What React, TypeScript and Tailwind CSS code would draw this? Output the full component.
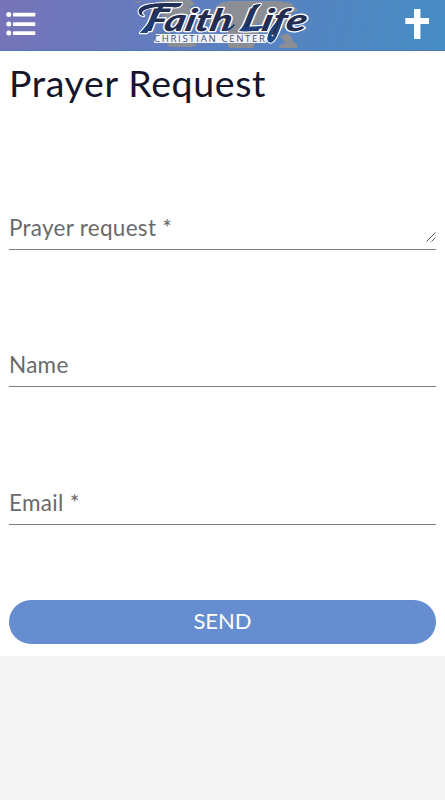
import { useState } from "react";
import type { FormEvent } from "react";

interface Field {
  id: string;
  label: string;
  multiline?: boolean;
  labelClass: string;
}

const fields: Field[] = [
  { id: "request", label: "Prayer request *", multiline: true, labelClass: "placeholder:tracking-[0.28px]" },
  { id: "name", label: "Name", labelClass: "placeholder:tracking-[0.3px]" },
  { id: "email", label: "Email *", labelClass: "placeholder:tracking-[0.3px]" },
];

const swashes = [
  "M145 16C137 15 138 7 148 5c10-2 20-2 35-2-1 4-5 5-10 4-12-1-25 0-29 4-2 2-1 3 1 5z",
  "M160 6l5 0C158 15 155 24 148 33h-7c8-8 13-17 19-27z",
  "M280 19c-9 9-14 20-10 23 5 3 10-9 13-22l-3 1c-3 10-6 16-7 16-2-1 3-10 7-18z",
  "M255 5l7-1c-8 8-10 17-16 23l16-1c2 0 3 1 1 2-6 3-14 4-23 3 8-8 9-17 15-26z",
];

function MenuIcon() {
  return (
    <svg className="block h-6 w-[30px]" viewBox="0 0 30 24" fill="#fff">
      {[2.5, 12, 21].map((y) => (
        <g key={y}>
          <circle cx="2.8" cy={y} r="2.5" />
          <rect x="7" y={y - 1.7} width="22.3" height="3.6" rx="0.4" />
        </g>
      ))}
    </svg>
  );
}

function CrossIcon() {
  return (
    <svg className="block h-[30px] w-6" viewBox="0 0 24 30" fill="#fff">
      <path d="M9 0h6.4v9H24v6h-8.6v15H9V15H.3V9H9z" />
    </svg>
  );
}

function Logo() {
  return (
    <svg className="block h-[51px] w-[180px]" viewBox="132 0 180 51">
      <defs>
        <linearGradient id="ink" gradientUnits="userSpaceOnUse" x1="0" y1="2" x2="0" y2="42">
          <stop offset="0" stopColor="#232d52" />
          <stop offset="1" stopColor="#1b4a8c" />
        </linearGradient>
      </defs>
      <g fill="#8b8e94">
        <path d="M134 3l5-2 4 1-4 1zM151 5l7-3 12-2h22l4 4-5 3 3 5-7 5-4 8 5 6-5 1-6-7-9-3-6-8-11-2z" />
        <path d="M169 44l2-4 24 1 3 5-7 1h-21z" />
        <path d="M217 6l7-4 10-1 7 3 11-3 8 2-2 6 4 7-5 10 3 8-6 14h-24l-3-8 2-8-6-5-10 1-4-6 4-9z" />
        <path d="M229 1h51l12 2 4 5 4 2-6 2-3 7-4 2-2 7-8 2-4-5-7 4-8-8-23 1z" />
        <path d="M281 36l8-3 4 5 1 4 4 2v4h-18l1-3 5-2z" />
      </g>
      <path d="M157 34h114l-4 9H155z" fill="#f1f3f8" />
      <g
        fill="url(#ink)"
        stroke="#fff"
        strokeWidth="2.4"
        strokeLinejoin="round"
        paintOrder="stroke"
        fontFamily="Lato, sans-serif"
        fontStyle="italic"
        fontWeight="900"
        fontSize="31"
      >
        {swashes.map((d) => (
          <path key={d} d={d} />
        ))}
        <text transform="translate(145 31) skewX(-13)" textLength="86" lengthAdjust="spacingAndGlyphs">
          Faith
        </text>
        <text transform="translate(241 31) skewX(-13)" textLength="65" lengthAdjust="spacingAndGlyphs">
          Life
        </text>
      </g>
      <text
        x="155"
        y="42.4"
        fill="#3f4f78"
        fontFamily="Open Sans, Liberation Sans, sans-serif"
        fontSize="9.6"
        textLength="111"
        lengthAdjust="spacing"
      >
        CHRISTIAN CENTER
      </text>
      <g fill="url(#ink)">
        {swashes.map((d) => (
          <path key={d} d={d} />
        ))}
        <path d="M227 28c2 1 5-1 8-4l1 1c-3 4-7 7-10 6z" />
      </g>
    </svg>
  );
}

function ResizeHandle() {
  return (
    <svg
      className="pointer-events-none absolute right-0 bottom-[7px] h-[10px] w-[10px]"
      viewBox="0 0 10 10"
      stroke="#555"
      strokeWidth="1"
    >
      <path d="M.5 9.5l9-9M5.5 9.5l4-4" />
    </svg>
  );
}

export default function App() {
  const [values, setValues] = useState<Record<string, string>>({});

  function update(id: string, value: string) {
    setValues((prev) => ({ ...prev, [id]: value }));
  }

  function send(e: FormEvent) {
    e.preventDefault();
    setValues({});
  }

  return (
    <div className="flex h-screen flex-col bg-[#f5f5f5] font-['Lato','Liberation_Sans',sans-serif]">
      <header className="flex h-[51px] shrink-0 items-center justify-between border-b border-[#4c78ba] bg-linear-[105deg,#7773b8,#5b80c1_50%,#468dc3] pr-4 pl-1.5">
        <button type="button" aria-label="Menu" className="w-[30px] -translate-y-px">
          <MenuIcon />
        </button>
        <Logo />
        <button type="button" aria-label="Prayer" className="w-6 -translate-y-px">
          <CrossIcon />
        </button>
      </header>

      <form onSubmit={send} className="h-[605px] shrink-0 bg-white px-[9px]">
        <h1 className="h-[61px] pt-[7px] text-[37.5px] leading-[50px] tracking-[0.64px] whitespace-nowrap text-[#15152b]">Prayer Request</h1>

        {fields.map((f) => (
          <div key={f.id} className="relative flex h-[137.5px] items-end border-b border-[#808080]">
            {f.multiline ? (
              <textarea
                rows={1}
                value={values[f.id] ?? ""}
                placeholder={f.label}
                onChange={(e) => update(f.id, e.target.value)}
                className={`block h-[42px] w-full resize-none overflow-hidden bg-transparent pt-[7px] text-[22.5px] leading-7 outline-none placeholder:text-[#6a6a6a] ${f.labelClass}`}
              />
            ) : (
              <input
                value={values[f.id] ?? ""}
                placeholder={f.label}
                onChange={(e) => update(f.id, e.target.value)}
                className={`block h-[42px] w-full bg-transparent pb-px text-[22.5px] leading-7 outline-none placeholder:text-[#6a6a6a] ${f.labelClass}`}
              />
            )}
            {f.multiline && <ResizeHandle />}
          </div>
        ))}

        <button
          type="submit"
          className="mt-[75px] flex h-[44px] w-full items-center justify-center rounded-full bg-[#668dcf] pb-0.5 text-[22px] text-white"
        >
          SEND
        </button>
      </form>
    </div>
  );
}
